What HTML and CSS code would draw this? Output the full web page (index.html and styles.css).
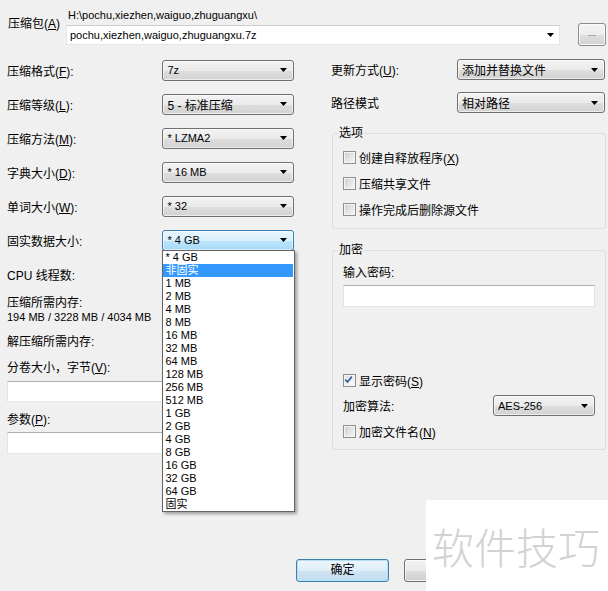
FILE: index.html
```html
<!DOCTYPE html>
<html lang="zh-CN">
<head>
<meta charset="utf-8">
<title>添加到压缩包</title>
<link rel="stylesheet" href="styles.css">
</head>
<body>
<div class="dialog">
  <div class="archive-row">
    <div class="archive-label">压缩包(<u>A</u>)</div>
    <div class="archive-field">
      <div class="path lat">H:\pochu,xiezhen,waiguo,zhuguangxu\</div>
      <div class="edit-combo"><span class="val lat">pochu,xiezhen,waiguo,zhuguangxu.7z</span><svg class="arrow" width="7" height="4" viewBox="0 0 7 4"><path d="M0 0H7L3.5 4Z"/></svg></div>
    </div>
    <div class="browse">...</div>
  </div>

  <div class="columns">
    <div class="left">
      <div class="row"><span class="lbl">压缩格式(<u>F</u>):</span><div class="combo"><span class="val lat">7z</span><svg class="arrow" width="7" height="4" viewBox="0 0 7 4"><path d="M0 0H7L3.5 4Z"/></svg></div></div>
      <div class="row"><span class="lbl">压缩等级(<u>L</u>):</span><div class="combo"><span class="val">5 - 标准压缩</span><svg class="arrow" width="7" height="4" viewBox="0 0 7 4"><path d="M0 0H7L3.5 4Z"/></svg></div></div>
      <div class="row"><span class="lbl">压缩方法(<u>M</u>):</span><div class="combo"><span class="val lat">* LZMA2</span><svg class="arrow" width="7" height="4" viewBox="0 0 7 4"><path d="M0 0H7L3.5 4Z"/></svg></div></div>
      <div class="row"><span class="lbl">字典大小(<u>D</u>):</span><div class="combo"><span class="val lat">* 16 MB</span><svg class="arrow" width="7" height="4" viewBox="0 0 7 4"><path d="M0 0H7L3.5 4Z"/></svg></div></div>
      <div class="row"><span class="lbl">单词大小(<u>W</u>):</span><div class="combo"><span class="val lat">* 32</span><svg class="arrow" width="7" height="4" viewBox="0 0 7 4"><path d="M0 0H7L3.5 4Z"/></svg></div></div>
      <div class="row"><span class="lbl">固实数据大小:</span>
        <div class="combo focused"><span class="val lat">* 4 GB</span><svg class="arrow" width="7" height="4" viewBox="0 0 7 4"><path d="M0 0H7L3.5 4Z"/></svg>
          <ul class="droplist lat">
            <li>* 4 GB</li>
            <li class="sel">非固实</li>
            <li>1 MB</li>
            <li>2 MB</li>
            <li>4 MB</li>
            <li>8 MB</li>
            <li>16 MB</li>
            <li>32 MB</li>
            <li>64 MB</li>
            <li>128 MB</li>
            <li>256 MB</li>
            <li>512 MB</li>
            <li>1 GB</li>
            <li>2 GB</li>
            <li>4 GB</li>
            <li>8 GB</li>
            <li>16 GB</li>
            <li>32 GB</li>
            <li>64 GB</li>
            <li>固实</li>
          </ul>
        </div>
      </div>
      <div class="row"><span class="lbl">CPU 线程数:</span></div>
      <div class="line mem-label">压缩所需内存:</div>
      <div class="line lat">194 MB / 3228 MB / 4034 MB</div>
      <div class="line demem-label">解压缩所需内存:</div>
      <div class="line vol-label">分卷大小，字节(<u>V</u>):</div>
      <div class="textbox vol"></div>
      <div class="line param-label">参数(<u>P</u>):</div>
      <div class="textbox param"></div>
    </div>

    <div class="right">
      <div class="rrow"><span class="rlbl">更新方式(<u>U</u>):</span><div class="combo wide"><span class="val">添加并替换文件</span><svg class="arrow" width="7" height="4" viewBox="0 0 7 4"><path d="M0 0H7L3.5 4Z"/></svg></div></div>
      <div class="rrow"><span class="rlbl">路径模式</span><div class="combo wide"><span class="val">相对路径</span><svg class="arrow" width="7" height="4" viewBox="0 0 7 4"><path d="M0 0H7L3.5 4Z"/></svg></div></div>

      <div class="group options">
        <div class="group-title">选项</div>
        <div class="check"><span class="cb"></span><span>创建自释放程序(<u>X</u>)</span></div>
        <div class="check"><span class="cb"></span><span>压缩共享文件</span></div>
        <div class="check"><span class="cb"></span><span>操作完成后删除源文件</span></div>
      </div>

      <div class="group encrypt">
        <div class="group-title">加密</div>
        <div class="line">输入密码:</div>
        <div class="textbox pwd"></div>
        <div class="check show-pwd"><span class="cb checked"><svg width="9" height="9" viewBox="0 0 9 9"><path d="M1.2 4.6L3.5 7L7.8 1.6" fill="none" stroke="#3b5ea8" stroke-width="1.7"/></svg></span><span>显示密码(<u>S</u>)</span></div>
        <div class="algo-row"><span>加密算法:</span><div class="combo algo"><span class="val lat">AES-256</span><svg class="arrow" width="7" height="4" viewBox="0 0 7 4"><path d="M0 0H7L3.5 4Z"/></svg></div></div>
        <div class="check"><span class="cb"></span><span>加密文件名(<u>N</u>)</span></div>
      </div>
    </div>
  </div>

  <div class="buttons">
    <div class="btn default">确定</div>
    <div class="btn" aria-label="取消"></div>
  </div>

  <div class="watermark">软件技巧</div>
</div>
</body>
</html>
```

FILE: styles.css
```css
* { box-sizing: border-box; }
html, body { margin: 0; padding: 0; }
body {
  background: #f0f0f0;
  font-family: "Liberation Sans", "Noto Sans CJK SC", sans-serif;
  font-size: 12px;
  color: #000;
}
u { text-decoration: underline; text-underline-offset: 1px; }
.lat { font-size: 11px; }

.dialog {
  position: relative;
  width: 608px;
  height: 591px;
  overflow: hidden;
}

/* top archive row */
.archive-row {
  display: flex;
  height: 53px;
  padding: 8px 0 0 8px;
}
.archive-label {
  width: 58px;
  margin-top: 9px;
  line-height: 14px;
}
.archive-field { width: 494px; }
.path {
  height: 17px;
  line-height: 14px;
  padding-left: 2px;
}
.edit-combo {
  display: flex;
  align-items: center;
  height: 20px;
  background: #fff;
  border: 1px solid #e2e5ea;
  border-top-color: #c9ccd1;
  padding-left: 3px;
}
.arrow { margin-left: auto; margin-right: 6px; flex: none; }
.edit-combo .arrow { margin-right: 5px; }
.browse {
  width: 28px;
  height: 23px;
  margin: 15px 0 0 18px;
  border: 1px solid #8a8a8a;
  border-radius: 3px;
  background: linear-gradient(#f4f4f4 0%, #ececec 50%, #dfdfdf 51%, #d3d3d3 100%);
  box-shadow: inset 0 0 0 1px #fbfbfb;
  font-size: 9px;
  line-height: 18px;
  text-align: center;
  color: #444;
}

/* columns */
.columns {
  display: flex;
  padding-left: 7px;
}
.left { width: 287px; }
.right { width: 275px; margin-left: 37px; }

.row {
  display: flex;
  align-items: center;
  height: 34px;
}
.lbl { width: 156px; }

.combo {
  position: relative;
  display: flex;
  align-items: center;
  width: 132px;
  height: 21px;
  padding-left: 4px;
  border: 1px solid #707070;
  border-radius: 3px;
  background: linear-gradient(#f3f3f3 0%, #ebebeb 50%, #dedede 51%, #d2d2d2 100%);
  box-shadow: inset 0 0 0 1px rgba(255,255,255,0.6);
}
.combo.focused {
  border-color: #3c7fb1;
  background: linear-gradient(#eaf6fd 0%, #d9f0fc 50%, #bee6fd 51%, #a7d9f5 100%);
}
.combo.wide { width: 148px; }
.combo.algo { width: 102px; }
.val { white-space: nowrap; }

.droplist {
  position: absolute;
  top: 100%;
  left: -1px;
  width: 133px;
  margin: 0;
  padding: 0;
  list-style: none;
  background: #fff;
  border: 1px solid #646464;
  box-shadow: 2px 2px 3px rgba(0,0,0,0.35);
  z-index: 10;
}
.droplist li {
  height: 13px;
  line-height: 13px;
  padding-left: 2px;
  white-space: nowrap;
}
.droplist li.sel {
  background: #3399ff;
  color: #fff;
  margin-right: 1px;
}

.line { line-height: 14px; height: 14px; }
.mem-label { margin-top: 5px; }
.demem-label { margin-top: 11px; }
.vol-label { margin-top: 12px; }
.param-label { margin-top: 11px; }

.textbox {
  background: #fff;
  border: 1px solid #e2e3ea;
  border-top-color: #abadb3;
  border-bottom-color: #e3e9ef;
}
.vol { margin-top: 6px; height: 21px; }
.param { margin-top: 5px; height: 22px; }

/* right column */
.rrow {
  display: flex;
  align-items: center;
  height: 33px;
}
.rlbl { width: 126px; }

.group {
  position: relative;
  margin-left: 1px;
  width: 274px;
  border: 1px solid #d5dfe5;
  border-radius: 3px;
  padding: 0 10px;
}
.group-title {
  position: absolute;
  top: -8px;
  left: 5px;
  padding: 0 1px;
  line-height: 14px;
  background: #f0f0f0;
}
.options {
  margin-top: 14px;
  padding-top: 10px;
  padding-bottom: 6px;
}
.encrypt {
  margin-top: 21px;
  padding-top: 15px;
  padding-bottom: 5px;
}
.check {
  display: flex;
  align-items: center;
  height: 26px;
}
.cb {
  width: 13px;
  height: 13px;
  margin-right: 3px;
  border: 1px solid #8e8f8f;
  padding: 1px;
  background: linear-gradient(135deg, #cdd1d6, #f5f5f5) content-box, #f4f4f4;
  flex: none;
}
.cb.checked {
  padding: 1px;
  background: linear-gradient(135deg, #dfe2e6, #fafafa) content-box, #f4f4f4;
}
.cb.checked svg { display: block; margin: -1px 0 0 -1px; }
.pwd { margin-top: 5px; height: 22px; }
.show-pwd { margin-top: 60px; }
.algo-row {
  display: flex;
  align-items: center;
  justify-content: space-between;
  height: 25px;
}

/* buttons */
.buttons {
  display: flex;
  gap: 15px;
  margin-top: 105px;
  padding-left: 296px;
}
.btn {
  width: 93px;
  height: 23px;
  border: 1px solid #707070;
  border-radius: 3px;
  background: linear-gradient(#f2f2f2 0%, #ebebeb 50%, #dddddd 51%, #cfcfcf 100%);
  box-shadow: inset 0 0 0 1px rgba(255,255,255,0.7);
  text-align: center;
  line-height: 21px;
}
.btn.default {
  border-color: #3c7fb1;
  background: linear-gradient(#eef6fc 0%, #e0eef8 50%, #cfe4f3 51%, #c3dcef 100%);
  box-shadow: inset 0 0 0 1px #b4e0f4;
}

/* watermark overlay */
.watermark {
  position: absolute;
  left: 426px;
  top: 500px;
  width: 182px;
  height: 91px;
  background: #fff;
  color: #d2d2d2;
  font-family: "Noto Sans CJK SC", sans-serif;
  font-weight: 300;
  font-size: 42px;
  line-height: 91px;
  padding-left: 6px;
  white-space: nowrap;
}
```
